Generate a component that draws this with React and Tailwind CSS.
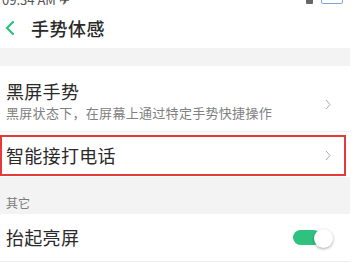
import React from 'react';

const font = { fontFamily: '"Noto Sans CJK SC", "Noto Sans", sans-serif' };

function Chevron() {
  return (
    <svg width="6" height="11" viewBox="0 0 6 11" className="shrink-0">
      <path d="M1 1 L5 5.5 L1 10" fill="none" stroke="#a8a8a8" strokeWidth="1" />
    </svg>
  );
}

export default function App() {
  return (
    <div className="w-[355px] h-[263px] overflow-hidden bg-white text-[#2a2a2a]" style={font}>
      <div className="h-[8px] overflow-hidden flex justify-between pr-[12px]">
        <span className="-mt-[9px] ml-[2px] text-[13px] leading-[18px] text-[#555]">09:34 AM ✈</span>
        <span className="-mt-[8px] flex items-start gap-[8px]">
          <span className="w-[7px] h-[12px] bg-[#666] rounded-[1px]" />
          <span className="w-[22px] h-[12px] border border-[#7aa7d9] rounded-[2px]" />
        </span>
      </div>

      <div className="h-[40px] flex items-center">
        <svg width="12" height="16" viewBox="0 0 12 16" className="ml-[4px]">
          <path d="M9 2 L3 8 L9 14" fill="none" stroke="#2ec27e" strokeWidth="2.2" strokeLinecap="round" />
        </svg>
        <span className="ml-[15px] text-[18px] leading-[22px] tracking-[0.5px] font-medium">手势体感</span>
      </div>

      <div className="w-[350px] h-[18px] bg-[#f3f3f3]" />

      <div className="w-[350px] h-[65px] flex items-center justify-between pl-[6px] pr-[19px] pt-[4px]">
        <div className="flex flex-col">
          <span className="text-[18px] leading-[23px] tracking-[0.3px]">黑屏手势</span>
          <span className="text-[13px] leading-[19px] text-[#808080] tracking-[0.3px]">黑屏状态下，在屏幕上通过特定手势快捷操作</span>
        </div>
        <div className="mt-[8px]"><Chevron /></div>
      </div>
      <div className="w-[350px] h-[1px] bg-[#eeeeee]" />

      <div className="w-[346px] h-[41px] mt-[3px] border-2 border-[#e53a3a] flex items-center justify-between pl-[4px] pr-[13px]">
        <span className="text-[18px] leading-[23px] tracking-[0.3px]">智能接打电话</span>
        <Chevron />
      </div>

      <div className="w-[350px] h-[37px] mt-[1px] bg-[#f3f3f3] flex items-end pl-[6px] pb-[3px]">
        <span className="text-[12px] leading-[16px] text-[#7a7a7a]">其它</span>
      </div>

      <div className="w-[350px] h-[47px] flex items-center justify-between pl-[6px] pr-[17px]">
        <span className="text-[18px] leading-[23px] tracking-[0.3px]">抬起亮屏</span>
        <div className="relative w-[40px] h-[20px] flex items-center">
          <div className="w-[28px] h-[15px] rounded-full bg-[#2ec27e]" />
          <div className="absolute right-0 top-[1px] w-[19px] h-[19px] rounded-full bg-white shadow-[0_1px_3px_rgba(0,0,0,0.35)]" />
        </div>
      </div>
      <div className="w-[350px] h-[1px] bg-[#eeeeee]" />
    </div>
  );
}
